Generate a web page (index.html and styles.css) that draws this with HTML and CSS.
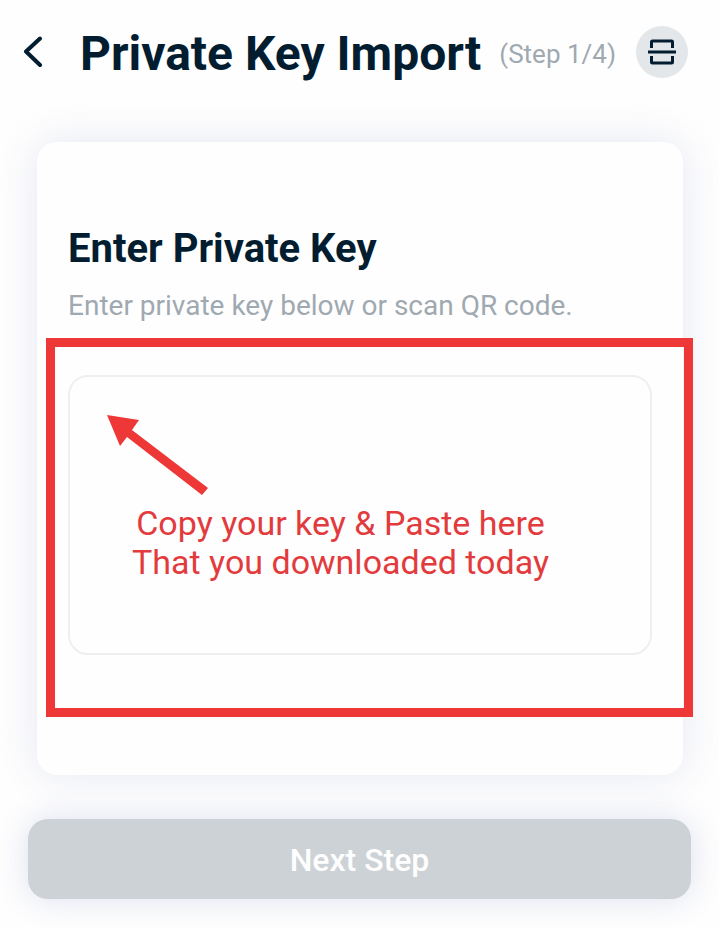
FILE: index.html
```html
<!DOCTYPE html>
<html lang="en">
<head>
    <meta charset="UTF-8">
    <meta name="viewport" content="width=device-width, initial-scale=1.0">
    <title>Private Key Import</title>
    <link rel="stylesheet" href="styles.css">
</head>
<body>
    <header class="topbar">
        <button type="button" class="back-btn" aria-label="Back">
            <svg width="20" height="32" viewBox="0 0 20 32" fill="none" stroke="currentColor" stroke-width="4" stroke-linecap="round" stroke-linejoin="round">
                <path d="M17 2.500 L3 15.500 L17 29"/>
            </svg>
        </button>
        <h1 class="title">Private Key Import</h1>
        <span class="step">(Step 1/4)</span>
        <button type="button" class="scan-btn" aria-label="Scan QR code">
            <svg width="28" height="28" viewBox="0 0 28 28" fill="none" stroke="currentColor" stroke-width="3">
                <path d="M3.500 10 V4 Q3.500 3 4.500 3 H23.500 Q24.500 3 24.500 4 V10"/>
                <path d="M3.500 18 V24 Q3.500 25 4.500 25 H23.500 Q24.500 25 24.500 24 V18"/>
                <path d="M0 14 H28"/>
            </svg>
        </button>
    </header>

    <form class="import-form">
        <div class="card">
            <h2 class="card-title"><label for="private-key">Enter Private Key</label></h2>
            <p class="card-hint" id="key-hint">Enter private key below or scan QR code.</p>

            <div class="key-field">
                <textarea id="private-key" class="key-input" aria-describedby="key-hint"></textarea>

                <!-- tutorial callout over the field -->
                <div class="callout-frame"></div>
                <svg class="callout-arrow" width="102" height="82" viewBox="0 0 102 82" fill="#ee3737">
                    <path d="M0 0 L32 5 L25 15 L101 73 L95 80 L20 22 L13 31 Z"/>
                </svg>
                <p class="callout-text">Copy your key &amp; Paste here<br>That you downloaded today</p>
            </div>
        </div>

        <button type="submit" class="next-btn" disabled>Next Step</button>
    </form>
</body>
</html>
```

FILE: styles.css
```css
* {
    box-sizing: border-box;
}
body {
    margin: 0;
    font-family: Roboto, "Liberation Sans", sans-serif;
    background: #fefefe;
    color: #021c30;
}
h1, h2, p {
    margin: 0;
}
button {
    font-family: inherit;
    border: none;
    padding: 0;
}

/* Header */
.topbar {
    display: flex;
    align-items: center;
    height: 104px;
    padding: 0 31px 0 23px;
}
.back-btn {
    display: flex;
    background: none;
    color: inherit;
    margin-right: 37px;
}
.title {
    padding-top: 4px;
    font-size: 48px;
    line-height: 56px;
    font-weight: 700;
    white-space: nowrap;
}
.step {
    margin-left: 18px;
    padding-top: 4px;
    font-size: 26px;
    line-height: 32px;
    color: #9fa9b1;
    white-space: nowrap;
}
.scan-btn {
    display: flex;
    align-items: center;
    justify-content: center;
    flex: none;
    width: 52px;
    height: 52px;
    margin-left: auto;
    border-radius: 50%;
    background: #e3e7ea;
    color: #021c30;
}

/* Form */
.import-form {
    display: flex;
    flex-direction: column;
    gap: 44px;
    padding: 38px 28px 29px;
}
.card {
    margin: 0 8px 0 9px;
    padding: 83px 31px 120px;
    border-radius: 20px;
    background: #fefefe;
    box-shadow: 0 0 40px rgba(60, 80, 160, 0.13);
}
.card-title {
    font-size: 40px;
    line-height: 48px;
    font-weight: 700;
}
.card-hint {
    margin-top: 16px;
    font-size: 28px;
    line-height: 34px;
    color: #9fa9b1;
}
.key-field {
    position: relative;
    margin-top: 52px;
}
.key-input {
    display: block;
    width: 100%;
    height: 280px;
    padding: 24px;
    border: 2px solid #efefef;
    border-radius: 20px;
    background: transparent;
    font-family: inherit;
    font-size: 28px;
    color: inherit;
    resize: none;
    outline: none;
}
.next-btn {
    height: 80px;
    padding-top: 2px;
    border-radius: 20px;
    background: #cdd2d6;
    color: #fefefe;
    font-size: 32px;
    font-weight: 500;
    box-shadow: 0 0 32px rgba(60, 80, 160, 0.17);
}

/* Callout */
.callout-frame {
    position: absolute;
    inset: -37px -41px -62px -22px;
    border: 9px solid #ee3737;
    pointer-events: none;
}
.callout-arrow {
    position: absolute;
    top: 40px;
    left: 39px;
    pointer-events: none;
}
.callout-text {
    position: absolute;
    top: 129px;
    left: 64px;
    font-size: 34px;
    line-height: 39px;
    text-align: center;
    white-space: nowrap;
    color: #e33b3d;
    pointer-events: none;
}
```
